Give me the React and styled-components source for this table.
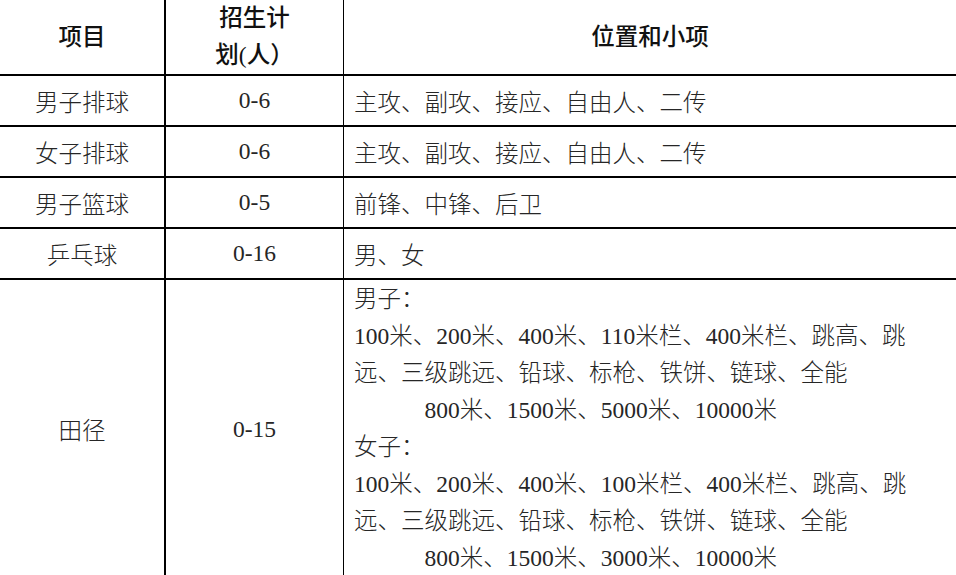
import React from 'react';
import styled, { createGlobalStyle } from 'styled-components';

const GlobalStyle = createGlobalStyle`
  html, body {
    margin: 0;
    padding: 0;
    background: #fff;
  }
  body {
    width: 956px;
    height: 575px;
    overflow: hidden;
    font-family: "Liberation Serif", "Noto Sans CJK SC", serif;
  }
`;

// --- tabla ---
const Table = styled.div`
  display: grid;
  grid-template-columns: 166px 178px 1fr;
  width: 956px;
  color: #262626;
  font-size: 23.5px;
  font-weight: 300;
`;

const Cell = styled.div`
  box-sizing: border-box;
  display: flex;
  align-items: center;
  justify-content: ${p => (p.$left ? 'flex-start' : 'center')};
  padding-left: ${p => (p.$left ? '10px' : '0')};
  min-height: 51px;
  border-bottom: 2px solid #000;
  border-right: ${p =>
    p.$col === 0 ? '2px solid #000' : p.$col === 1 ? '1px solid #000' : 'none'};
  white-space: nowrap;
`;

const HeadCell = styled(Cell)`
  min-height: 75px;
  font-weight: 500;
  color: #111;
  text-align: center;
  line-height: 37px;
`;

const ListCell = styled(Cell)`
  display: block;
  padding-top: 1px;
  padding-bottom: 1px;
  line-height: 37px;
`;

const Line = styled.div`
  padding-left: ${p => (p.$indent ? '3em' : '0')};
`;

const rows = [
  ['男子排球', '0-6', '主攻、副攻、接应、自由人、二传'],
  ['女子排球', '0-6', '主攻、副攻、接应、自由人、二传'],
  ['男子篮球', '0-5', '前锋、中锋、后卫'],
  ['乒乓球', '0-16', '男、女'],
];

const track = [
  { text: '男子：' },
  { text: '100米、200米、400米、110米栏、400米栏、跳高、跳' },
  { text: '远、三级跳远、铅球、标枪、铁饼、链球、全能' },
  { text: '800米、1500米、5000米、10000米', indent: true },
  { text: '女子：' },
  { text: '100米、200米、400米、100米栏、400米栏、跳高、跳' },
  { text: '远、三级跳远、铅球、标枪、铁饼、链球、全能' },
  { text: '800米、1500米、3000米、10000米', indent: true },
];

const App = () => (
  <>
    <GlobalStyle />
    <Table>
      <HeadCell $col={0}>项目</HeadCell>
      <HeadCell $col={1}>
        招生计
        <br />
        划(人）
      </HeadCell>
      <HeadCell $col={2}>位置和小项</HeadCell>

      {rows.map(([name, plan, items]) => (
        <React.Fragment key={name}>
          <Cell $col={0}>{name}</Cell>
          <Cell $col={1}>{plan}</Cell>
          <Cell $col={2} $left>{items}</Cell>
        </React.Fragment>
      ))}

      <Cell $col={0}>田径</Cell>
      <Cell $col={1}>0-15</Cell>
      <ListCell $col={2} $left>
        {track.map((l, i) => (
          <Line key={i} $indent={l.indent}>{l.text}</Line>
        ))}
      </ListCell>
    </Table>
  </>
);

export default App;
